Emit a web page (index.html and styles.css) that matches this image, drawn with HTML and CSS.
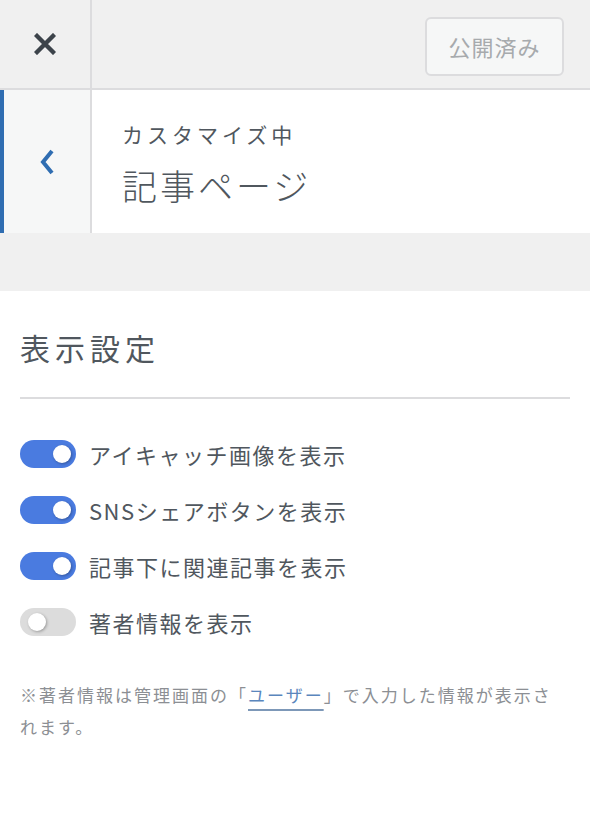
FILE: index.html
```html
<!DOCTYPE html>
<html lang="ja">
<head>
    <meta charset="UTF-8">
    <meta name="viewport" content="width=device-width, initial-scale=1.0">
    <title>記事ページ</title>
    <link rel="stylesheet" href="styles.css">
</head>
<body>
    <div class="topbar">
        <button class="close-btn" type="button" aria-label="閉じる">
            <svg width="22" height="22" viewBox="0 0 22 22">
                <path d="M3 3 L19 19 M19 3 L3 19" stroke="#3c434a" stroke-width="4.4" stroke-linecap="square" fill="none"/>
            </svg>
        </button>
        <div class="topbar-space"></div>
        <button class="publish-btn" type="button" disabled>公開済み</button>
    </div>

    <div class="section-head">
        <button class="back-btn" type="button" aria-label="戻る">
            <svg width="18" height="30" viewBox="0 0 18 30">
                <path d="M14 4 L5 15 L14 26" stroke="#2f6db1" stroke-width="4" fill="none"/>
            </svg>
        </button>
        <div class="section-info">
            <span class="section-label">カスタマイズ中</span>
            <span class="section-title">記事ページ</span>
        </div>
    </div>

    <div class="band"></div>

    <div class="panel">
        <h2 class="panel-title">表示設定</h2>
        <hr class="divider">

        <ul class="toggle-list">
            <li class="toggle-row">
                <span class="toggle on"><span class="knob"></span></span>
                <span class="toggle-label">アイキャッチ画像を表示</span>
            </li>
            <li class="toggle-row">
                <span class="toggle on"><span class="knob"></span></span>
                <span class="toggle-label">SNSシェアボタンを表示</span>
            </li>
            <li class="toggle-row">
                <span class="toggle on"><span class="knob"></span></span>
                <span class="toggle-label">記事下に関連記事を表示</span>
            </li>
            <li class="toggle-row">
                <span class="toggle"><span class="knob"></span></span>
                <span class="toggle-label">著者情報を表示</span>
            </li>
        </ul>

        <p class="note">※著者情報は管理画面の「<a href="#">ユーザー</a>」で入力した情報が表示されます。</p>
    </div>
</body>
</html>
```

FILE: styles.css
```css
body {
    margin: 0;
    background: #fff;
    font-family: "Noto Sans CJK JP", "Noto Sans", sans-serif;
    color: #50575e;
}
button {
    font-family: inherit;
}

/* 上部バー */
.topbar {
    display: flex;
    align-items: center;
    height: 88px;
    background: #f0f0f0;
    border-bottom: 2px solid #dcdcde;
}
.close-btn {
    width: 92px;
    height: 88px;
    padding: 0;
    border: none;
    border-right: 2px solid #dcdcde;
    background: transparent;
    display: flex;
    align-items: center;
    justify-content: center;
}
.topbar-space {
    flex: 1;
}
.publish-btn {
    width: 139px;
    height: 59px;
    margin-right: 26px;
    margin-top: 4px;
    border: 2px solid #dcdcde;
    border-radius: 6px;
    background: #f6f7f7;
    color: #a7aaad;
    font-size: 22px;
    letter-spacing: 1px;
}

/* セクション見出し */
.section-head {
    display: flex;
    height: 143px;
    background: #fff;
}
.back-btn {
    width: 92px;
    padding: 0;
    border: none;
    border-left: 4px solid #2f6db1;
    border-right: 2px solid #dcdcde;
    background: #f6f7f7;
    display: flex;
    align-items: center;
    justify-content: center;
}
.section-info {
    display: flex;
    flex-direction: column;
    justify-content: center;
    padding-left: 30px;
    padding-top: 6px;
}
.section-label {
    font-size: 21px;
    letter-spacing: 4px;
    line-height: 34px;
    color: #50575e;
}
.section-title {
    margin-top: 7px;
    font-size: 35px;
    font-weight: 300;
    letter-spacing: 3px;
    line-height: 54px;
    color: #50575e;
}

.band {
    height: 58px;
    background: #f0f0f0;
}

/* 設定パネル */
.panel {
    padding: 0 20px;
}
.panel-title {
    margin: 0;
    padding-top: 36px;
    font-size: 30px;
    font-weight: 400;
    letter-spacing: 5px;
    line-height: 40px;
    color: #50575e;
}
.divider {
    margin: 30px 0 0;
    border: none;
    border-top: 2px solid #dcdcde;
}
.toggle-list {
    list-style: none;
    margin: 0;
    padding: 41px 0 0;
    display: flex;
    flex-direction: column;
    gap: 28px;
}
.toggle-row {
    display: flex;
    align-items: center;
    gap: 13px;
    height: 28px;
}
.toggle {
    position: relative;
    width: 56px;
    height: 28px;
    border-radius: 14px;
    background: #dcdcdc;
    flex: none;
}
.toggle.on {
    background: #4a7be0;
}
.knob {
    position: absolute;
    top: 5px;
    left: 8px;
    width: 18px;
    height: 18px;
    border-radius: 50%;
    background: #fff;
    box-shadow: 1px 1px 3px rgba(0, 0, 0, 0.3);
}
.toggle.on .knob {
    left: 33px;
}
.toggle-label {
    font-size: 22px;
    letter-spacing: 1.5px;
    color: #50575e;
}
.note {
    margin: 43px 0 0;
    font-size: 17px;
    line-height: 32px;
    letter-spacing: 2px;
    color: #8c8f94;
}
.note a {
    color: #5a86bd;
    text-decoration: underline;
    text-decoration-color: #7d98b8;
    text-decoration-thickness: 2px;
    text-underline-offset: 7px;
}
```
